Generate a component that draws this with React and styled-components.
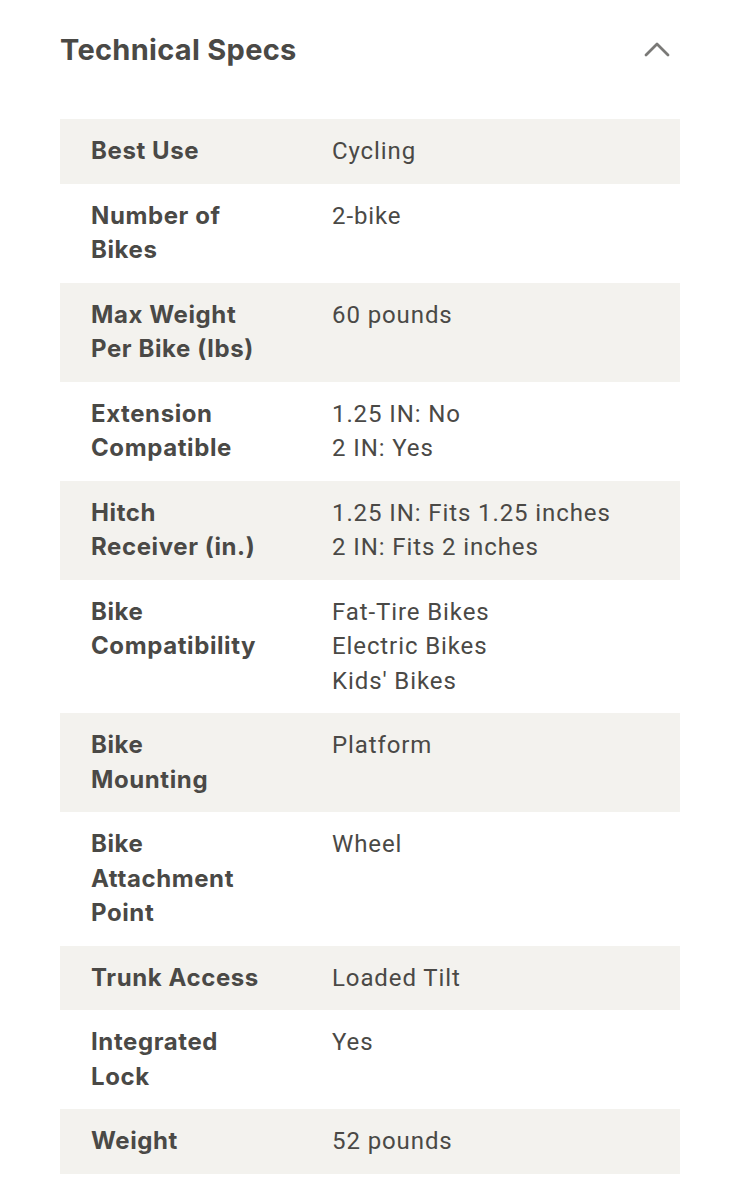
import React from "react";
import styled, { createGlobalStyle } from "styled-components";

const Global = createGlobalStyle`
  html, body { margin: 0; padding: 0; background: #ffffff; }
  body { font-family: Inter, Roboto, "Liberation Sans", Arial, sans-serif; color: #4a4946; }
`;

const Section = styled.section`
  width: 620px;
  margin: 0 0 0 60px;
  padding-bottom: 28px;
`;

const Header = styled.div`
  display: flex;
  align-items: center;
  justify-content: space-between;
  height: 98px;
  padding-bottom: 21px;
  box-sizing: content-box;
`;

const Title = styled.h2`
  margin: 0;
  font-size: 29px;
  font-weight: 700;
  letter-spacing: 0.3px;
  color: #4a4946;
`;

const Toggle = styled.button`
  border: 0;
  background: none;
  padding: 0;
  margin-right: 10px;
  display: flex;
  cursor: pointer;
`;

const Table = styled.div`
  display: flex;
  flex-direction: column;
`;

const Row = styled.div`
  display: grid;
  grid-template-columns: 241px 1fr;
  padding: 15px 0 15px 31px;
  background: ${(p) => (p.$shaded ? "#f3f2ee" : "#ffffff")};
  font-size: 24px;
  line-height: 34.5px;
`;

const Label = styled.div`
  font-weight: 700;
  letter-spacing: 0.6px;
  color: #4a4946;
  white-space: nowrap;
`;

const Value = styled.div`
  font-family: Roboto, "Liberation Sans", Arial, sans-serif;
  font-weight: 400;
  letter-spacing: 0.9px;
  color: #4a4946;
  white-space: nowrap;
`;

const specs = [
  [["Best Use"], ["Cycling"]],
  [["Number of", "Bikes"], ["2-bike"]],
  [["Max Weight", "Per Bike (lbs)"], ["60 pounds"]],
  [["Extension", "Compatible"], ["1.25 IN: No", "2 IN: Yes"]],
  [["Hitch", "Receiver (in.)"], ["1.25 IN: Fits 1.25 inches", "2 IN: Fits 2 inches"]],
  [["Bike", "Compatibility"], ["Fat-Tire Bikes", "Electric Bikes", "Kids' Bikes"]],
  [["Bike", "Mounting"], ["Platform"]],
  [["Bike", "Attachment", "Point"], ["Wheel"]],
  [["Trunk Access"], ["Loaded Tilt"]],
  [["Integrated", "Lock"], ["Yes"]],
  [["Weight"], ["52 pounds"]],
];

const Lines = ({ lines }) =>
  lines.map((l, i) => (
    <React.Fragment key={i}>
      {i > 0 && <br />}
      {l}
    </React.Fragment>
  ));

export default function App() {
  return (
    <>
      <Global />
      <Section>
        <Header>
          <Title>Technical Specs</Title>
          <Toggle aria-label="Collapse">
            <svg width="26" height="16" viewBox="0 0 26 16" fill="none">
              <path d="M2 14 L13 3 L24 14" stroke="#7a7977" strokeWidth="2.8" strokeLinecap="round" strokeLinejoin="round" />
            </svg>
          </Toggle>
        </Header>
        <Table>
          {specs.map(([label, value], i) => (
            <Row key={i} $shaded={i % 2 === 0}>
              <Label><Lines lines={label} /></Label>
              <Value><Lines lines={value} /></Value>
            </Row>
          ))}
        </Table>
      </Section>
    </>
  );
}
